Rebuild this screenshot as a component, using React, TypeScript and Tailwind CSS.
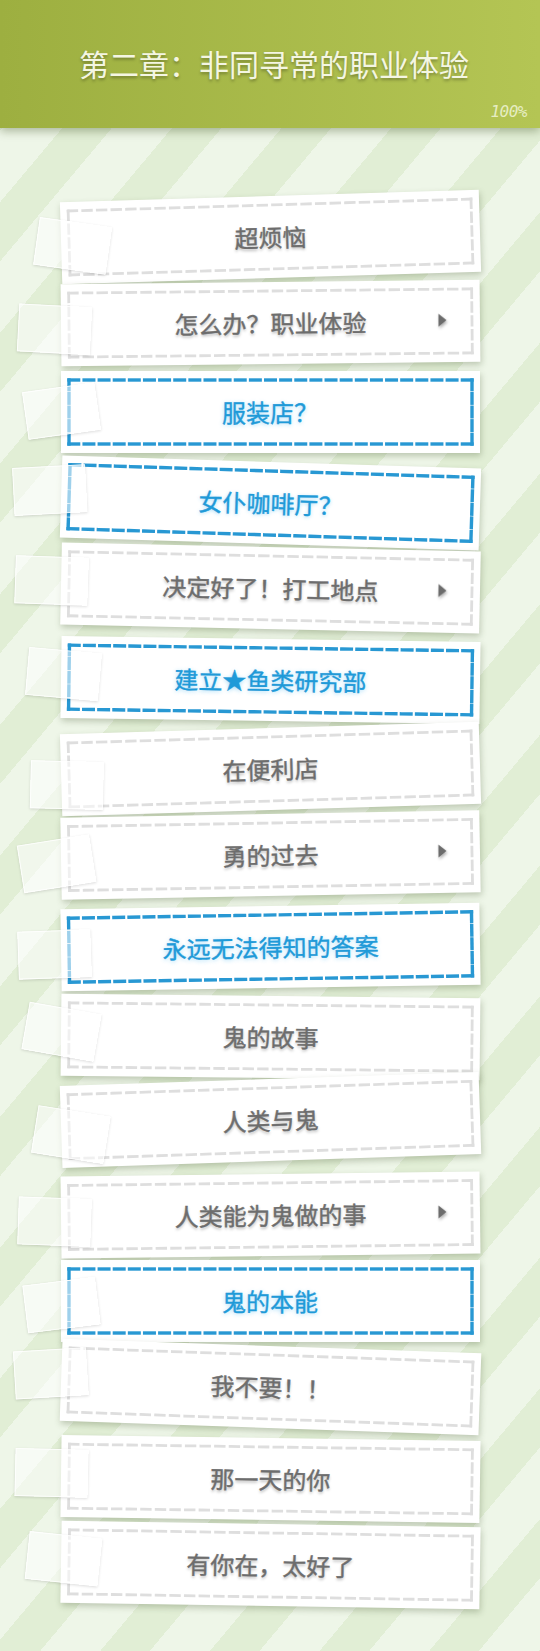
import React from "react";

type Entry = {
  label: string;
  blue?: boolean;
  arrow?: boolean;
  card: string;
  tape: string;
};

const entries: Entry[] = [
  { label: "超烦恼", card: "rotate-[-1.7deg] translate-y-[0px]", tape: "left-[-25px] top-[20px] rotate-[9.7deg]" },
  { label: "怎么办？职业体验", arrow: true, card: "rotate-[-0.6deg] translate-y-[-3px]", tape: "left-[-43px] top-[21px] rotate-[3.6deg]" },
  { label: "服装店？", blue: true, card: "rotate-[0deg] translate-y-[-2px]", tape: "left-[-36px] top-[16px] rotate-[-8deg]" },
  { label: "女仆咖啡厅？", blue: true, card: "rotate-[1.8deg] translate-y-[0px]", tape: "left-[-48px] top-[11px] rotate-[-4.8deg]" },
  { label: "决定好了！打工地点", arrow: true, card: "rotate-[1.2deg] translate-y-[-3px]", tape: "left-[-46px] top-[14px] rotate-[0.8deg]" },
  { label: "建立★鱼类研究部", blue: true, card: "rotate-[0.8deg] translate-y-[0px]", tape: "left-[-34px] top-[14px] rotate-[4.2deg]" },
  { label: "在便利店", card: "rotate-[-1.7deg] translate-y-[1px]", tape: "left-[-31px] top-[27px] rotate-[3.1deg]" },
  { label: "勇的过去", arrow: true, card: "rotate-[-1deg] translate-y-[-2px]", tape: "left-[-41px] top-[22px] rotate-[-8deg]" },
  { label: "永远无法得知的答案", blue: true, card: "rotate-[-0.9deg] translate-y-[2px]", tape: "left-[-43px] top-[21px] rotate-[-1.1deg]" },
  { label: "鬼的故事", card: "rotate-[0.6deg] translate-y-[3px]", tape: "left-[-36px] top-[14px] rotate-[9.4deg]" },
  { label: "人类与鬼", card: "rotate-[-1.9deg] translate-y-[-2px]", tape: "left-[-27px] top-[25px] rotate-[10.9deg]" },
  { label: "人类能为鬼做的事", arrow: true, card: "rotate-[-0.7deg] translate-y-[4px]", tape: "left-[-43px] top-[21px] rotate-[2.7deg]" },
  { label: "鬼的本能", blue: true, card: "rotate-[0deg] translate-y-[2px]", tape: "left-[-36px] top-[21px] rotate-[-7deg]" },
  { label: "我不要！！", card: "rotate-[2deg] translate-y-[-1px]", tape: "left-[-47px] top-[11px] rotate-[-5.5deg]" },
  { label: "那一天的你", card: "rotate-[0.8deg] translate-y-[3px]", tape: "left-[-46px] top-[14px] rotate-[0.6deg]" },
  { label: "有你在，太好了", card: "rotate-[0.9deg] translate-y-[0px]", tape: "left-[-34px] top-[14px] rotate-[5.1deg]" },
];

const W = 419;
const H = 82;

// Evenly spread dashes along one side so that both ends start with a dash,
// which turns every corner into a small "L".
function sideDashes(x1: number, y1: number, x2: number, y2: number, dash: number, gap: number) {
  const len = Math.hypot(x2 - x1, y2 - y1);
  const n = Math.max(2, Math.round((len + gap) / (dash + gap)));
  const g = (len - n * dash) / (n - 1);
  const ux = (x2 - x1) / len;
  const uy = (y2 - y1) / len;
  const segs: [number, number, number, number][] = [];
  for (let i = 0; i < n; i++) {
    const s = i * (dash + g);
    const e = s + dash;
    segs.push([x1 + ux * s, y1 + uy * s, x1 + ux * e, y1 + uy * e]);
  }
  return segs;
}

function DashedFrame({ blue }: { blue?: boolean }) {
  const left = 8;
  const right = W - 8;
  const top = 9;
  const bottom = H - 9;
  const dash = blue ? 9.6 : 8.6;
  const gap = blue ? 5.6 : 6;
  const sw = blue ? 3.4 : 2.8;
  const color = blue ? "#2898d3" : "#dedede";
  const segs = [
    ...sideDashes(left, top, right, top, dash, gap),
    ...sideDashes(left, bottom, right, bottom, dash, gap),
    ...sideDashes(left, top, left, bottom, dash, gap),
    ...sideDashes(right, top, right, bottom, dash, gap),
  ];
  return (
    <svg
      className="absolute inset-0 pointer-events-none"
      width={W}
      height={H}
      viewBox={`0 0 ${W} ${H}`}
    >
      {segs.map((s, i) => (
        <line
          key={i}
          x1={s[0]}
          y1={s[1]}
          x2={s[2]}
          y2={s[3]}
          stroke={color}
          strokeWidth={sw}
          strokeLinecap="square"
        />
      ))}
    </svg>
  );
}

function Arrow() {
  return (
    <svg
      className="absolute left-[377px] top-[33px] drop-shadow-[1px_2px_1.5px_rgba(0,0,0,0.3)]"
      width="9"
      height="14"
      viewBox="0 0 9 14"
    >
      <path d="M0.5 0.5 L8.5 7 L0.5 13.5 Z" fill="#6c6c6c" />
    </svg>
  );
}

function Card({ e }: { e: Entry }) {
  return (
    <div
      className={`relative mx-auto w-[419px] h-[82px] shrink-0 bg-white shadow-[1px_3px_6px_rgba(60,80,40,0.28)] flex items-center justify-center ${e.card}`}
    >
      <DashedFrame blue={e.blue} />
      <span
        className={
          e.blue
            ? "relative text-[24px] font-normal leading-none text-[#1f9ad8] [-webkit-text-stroke:0.4px_#1f9ad8] [text-shadow:0_1px_4px_rgba(40,170,240,0.45)]"
            : "relative text-[24px] font-normal leading-none text-[#6d6d6d] [-webkit-text-stroke:0.4px_#6d6d6d] [text-shadow:0_2px_3px_rgba(0,0,0,0.28)]"
        }
      >
        {e.label}
      </span>
      {e.arrow && <Arrow />}
      <div
        className={`absolute w-[73px] h-[48px] bg-[rgba(255,255,255,0.55)] border border-[rgba(255,255,255,0.8)] shadow-[0_1px_3px_rgba(0,0,0,0.14)] ${e.tape}`}
      />
    </div>
  );
}

export default function App() {
  return (
    <div className="w-[540px] min-h-[1651px] font-['Noto_Sans_CJK_SC',sans-serif] bg-[repeating-linear-gradient(130deg,#eef6e8_0px,#eef6e8_46px,#e1eed5_46px,#e1eed5_84px)] overflow-hidden">
      <header className="relative z-10 h-[128px] flex items-center justify-center bg-[linear-gradient(90deg,#9daf40,#b4c554)] shadow-[0_3px_9px_rgba(40,60,10,0.35)]">
        <h1 className="text-[30px] font-normal leading-none text-[#f4f6e2] [text-shadow:0_2px_3px_rgba(0,0,0,0.3)] translate-x-[4px] -translate-y-[1px]">
          第二章：非同寻常的职业体验
        </h1>
        <span className="absolute right-[13px] bottom-[8px] font-['DejaVu_Sans_Mono',monospace] italic font-light text-[16px] leading-none text-[#e6edc2] tracking-[-0.5px]">
          100%
        </span>
      </header>
      <main className="flex flex-col gap-[6.5px] pt-[68px] pb-[45px]">
        {entries.map((e) => (
          <Card key={e.label} e={e} />
        ))}
      </main>
    </div>
  );
}
